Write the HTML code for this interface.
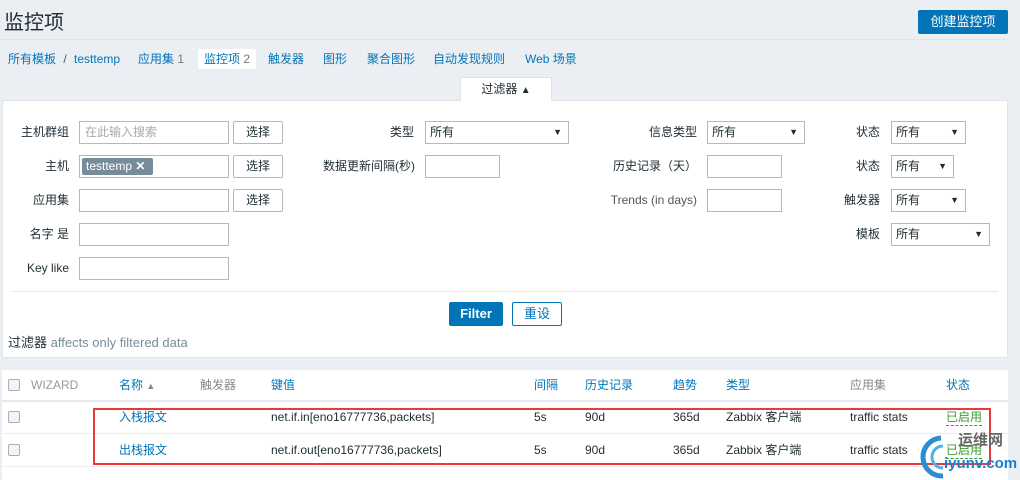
<!DOCTYPE html>
<html><head><meta charset="utf-8"><style>
*{margin:0;padding:0;box-sizing:border-box}
body{width:1020px;height:480px;background:#ebeef2;font-family:"Liberation Sans","Noto Sans CJK SC",sans-serif;font-size:12px;color:#1f2c33;position:relative;overflow:hidden}
.a{position:absolute;white-space:nowrap}
.t{line-height:16px}
.lnk{color:#0275b8}
.in{position:absolute;height:23px;border:1px solid #acbbc2;background:#fff}
.btn{position:absolute;height:23px;border:1px solid #acbbc2;background:#fff;text-align:center;line-height:21px;border-radius:2px}
.sel{position:absolute;height:23px;border:1px solid #acbbc2;background:#fff;line-height:21px;padding-left:4px}
.sel:after{content:"▼";position:absolute;right:6px;top:0;font-size:9px}
.lbl{position:absolute;text-align:right;line-height:23px}
.hd{color:#0275b8}
.cb{position:absolute;width:12px;height:12px;border:1px solid #aab;border-radius:2px;background:#f4f4f4}
</style></head><body>
<div class="a" style="left:4px;top:6px;font-size:20px;color:#1f2c33">监控项</div>
<div class="a" style="left:918px;top:10px;width:90px;height:24px;background:#0275b8;color:#fff;text-align:center;line-height:24px;border-radius:2px;font-size:13px">创建监控项</div>
<div class="a" style="left:0;top:39px;width:1008px;height:1px;background:#dfe4e7"></div>
<div class="a" style="left:198px;top:49px;width:58px;height:20px;background:#fff"></div>
<div class="a lnk t" style="left:8px;top:51px">所有模板 <span style="color:#555;margin:0 4px">/</span> testtemp</div>
<div class="a lnk t" style="left:138px;top:51px">应用集 <span style="color:#777">1</span></div>
<div class="a lnk t" style="left:204px;top:51px">监控项 <span style="color:#777">2</span></div>
<div class="a lnk t" style="left:268px;top:51px">触发器</div>
<div class="a lnk t" style="left:323px;top:51px">图形</div>
<div class="a lnk t" style="left:367px;top:51px">聚合图形</div>
<div class="a lnk t" style="left:433px;top:51px">自动发现规则</div>
<div class="a lnk t" style="left:525px;top:51px">Web 场景</div>
<div class="a" style="left:2px;top:100px;width:1006px;height:258px;background:#fff;border:1px solid #dfe4e7"></div>
<div class="a" style="left:460px;top:77px;width:92px;height:24px;background:#fff;border:1px solid #dfe4e7;border-bottom:none;text-align:center;line-height:23px">过滤器 <span style="font-size:10px">▲</span></div>

<div class="lbl" style="left:0;width:69px;top:121px">主机群组</div>
<div class="in" style="left:79px;top:121px;width:150px;color:#aaa;padding-left:5px;line-height:21px">在此输入搜索</div>
<div class="btn" style="left:233px;top:121px;width:50px">选择</div>
<div class="lbl" style="left:0;width:69px;top:155px">主机</div>
<div class="in" style="left:79px;top:155px;width:150px"></div>
<div class="a" style="left:82px;top:158px;width:71px;height:17px;background:#768d99;color:#fff;border-radius:2px;line-height:17px;padding-left:4px">testtemp <b>✕</b></div>
<div class="btn" style="left:233px;top:155px;width:50px">选择</div>
<div class="lbl" style="left:0;width:69px;top:189px">应用集</div>
<div class="in" style="left:79px;top:189px;width:150px"></div>
<div class="btn" style="left:233px;top:189px;width:50px">选择</div>
<div class="lbl" style="left:0;width:69px;top:223px">名字 是</div>
<div class="in" style="left:79px;top:223px;width:150px"></div>
<div class="lbl" style="left:0;width:69px;top:257px">Key like</div>
<div class="in" style="left:79px;top:257px;width:150px"></div>

<div class="lbl" style="left:300px;width:114px;top:121px">类型</div>
<div class="sel" style="left:425px;top:121px;width:144px">所有</div>
<div class="lbl" style="left:300px;width:115px;top:155px">数据更新间隔(秒)</div>
<div class="in" style="left:425px;top:155px;width:75px"></div>

<div class="lbl" style="left:580px;width:117px;top:121px">信息类型</div>
<div class="sel" style="left:707px;top:121px;width:98px">所有</div>
<div class="lbl" style="left:580px;width:117px;top:155px">历史记录（天）</div>
<div class="in" style="left:707px;top:155px;width:75px"></div>
<div class="lbl" style="left:580px;width:117px;top:189px;color:#555">Trends (in days)</div>
<div class="in" style="left:707px;top:189px;width:75px"></div>

<div class="lbl" style="left:800px;width:80px;top:121px">状态</div>
<div class="sel" style="left:891px;top:121px;width:75px">所有</div>
<div class="lbl" style="left:800px;width:80px;top:155px">状态</div>
<div class="sel" style="left:891px;top:155px;width:63px">所有</div>
<div class="lbl" style="left:800px;width:80px;top:189px">触发器</div>
<div class="sel" style="left:891px;top:189px;width:75px">所有</div>
<div class="lbl" style="left:800px;width:80px;top:223px">模板</div>
<div class="sel" style="left:891px;top:223px;width:99px">所有</div>

<div class="a" style="left:11px;top:291px;width:987px;height:1px;background:#e6e9eb"></div>
<div class="a" style="left:449px;top:302px;width:54px;height:24px;background:#0275b8;color:#fff;text-align:center;line-height:24px;border-radius:2px;font-weight:bold;font-size:13px">Filter</div>
<div class="a" style="left:512px;top:302px;width:50px;height:24px;border:1px solid #0275b8;color:#0275b8;text-align:center;line-height:22px;border-radius:2px;font-size:13px">重设</div>
<div class="a" style="left:8px;top:334px;font-size:13px;line-height:18px">过滤器 <span style="color:#768d99">affects only filtered data</span></div>

<div class="a" style="left:2px;top:370px;width:1006px;height:110px;background:#fff"></div>
<div class="a" style="left:2px;top:400px;width:1006px;height:2px;background:#e6e9eb"></div>
<div class="a" style="left:2px;top:433px;width:1006px;height:1px;background:#ebeef0"></div>
<div class="a" style="left:2px;top:466px;width:1006px;height:1px;background:#ebeef0"></div>
<div class="cb" style="left:8px;top:379px"></div>
<div class="a t" style="left:31px;top:377px;color:#999">WIZARD</div>
<div class="a hd t" style="left:119px;top:377px">名称 <span style="color:#888;font-size:9px">▲</span></div>
<div class="a t" style="left:200px;top:377px;color:#888">触发器</div>
<div class="a hd t" style="left:271px;top:377px">键值</div>
<div class="a hd t" style="left:534px;top:377px">间隔</div>
<div class="a hd t" style="left:585px;top:377px">历史记录</div>
<div class="a hd t" style="left:673px;top:377px">趋势</div>
<div class="a hd t" style="left:726px;top:377px">类型</div>
<div class="a t" style="left:850px;top:377px;color:#888">应用集</div>
<div class="a hd t" style="left:946px;top:377px">状态</div>

<div class="cb" style="left:8px;top:411px"></div>
<div class="a lnk t" style="left:119px;top:409px">入栈报文</div>
<div class="a t" style="left:271px;top:409px">net.if.in[eno16777736,packets]</div>
<div class="a t" style="left:534px;top:409px">5s</div>
<div class="a t" style="left:585px;top:409px">90d</div>
<div class="a t" style="left:673px;top:409px">365d</div>
<div class="a t" style="left:726px;top:409px">Zabbix 客户端</div>
<div class="a t" style="left:850px;top:409px">traffic stats</div>
<div class="a t" style="left:946px;top:409px;color:#3b9c2e;border-bottom:1px dashed #3b9c2e">已启用</div>

<div class="cb" style="left:8px;top:444px"></div>
<div class="a lnk t" style="left:119px;top:442px">出栈报文</div>
<div class="a t" style="left:271px;top:442px">net.if.out[eno16777736,packets]</div>
<div class="a t" style="left:534px;top:442px">5s</div>
<div class="a t" style="left:585px;top:442px">90d</div>
<div class="a t" style="left:673px;top:442px">365d</div>
<div class="a t" style="left:726px;top:442px">Zabbix 客户端</div>
<div class="a t" style="left:850px;top:442px">traffic stats</div>
<div class="a t" style="left:946px;top:442px;color:#3b9c2e;border-bottom:1px dashed #3b9c2e">已启用</div>

<div class="a" style="left:93px;top:408px;width:898px;height:57px;border:2px solid #e83a3a"></div>
<svg class="a" style="left:915px;top:432px" width="46" height="48"><path d="M26 6 A19 19 0 1 0 28 44" fill="none" stroke="#2a8fd0" stroke-width="5"/><path d="M28 14 A11 11 0 1 0 28 36" fill="none" stroke="#4fb0e8" stroke-width="3"/></svg>
<div class="a" style="left:958px;top:432px;font-size:15px;color:#666;font-weight:bold;line-height:18px">运维网</div>
<div class="a" style="left:944px;top:455px;font-size:15px;color:#1a7fcf;font-weight:bold;line-height:18px">iyunv.com</div>
</body></html>
